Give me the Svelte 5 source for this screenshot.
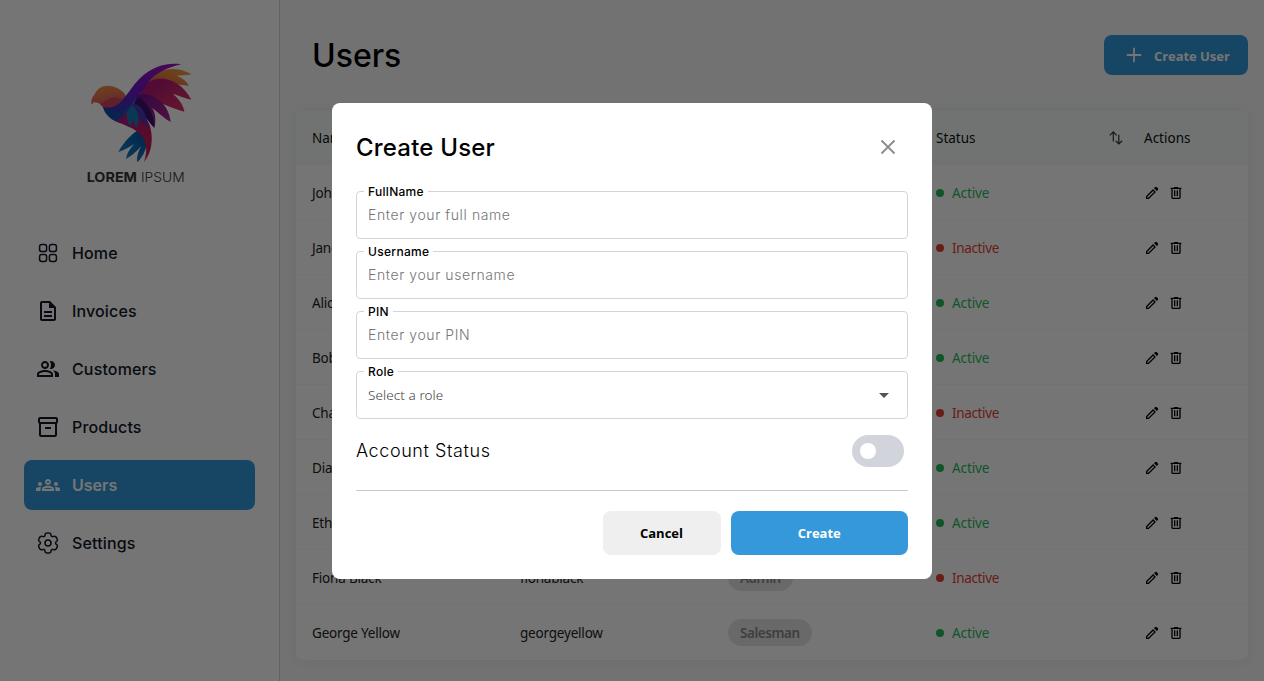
<script>
  const nav = [
    { label: 'Home', icon: 'home' },
    { label: 'Invoices', d: 'M8 16h8v2H8zm0-4h8v2H8zm6-10H6c-1.1 0-2 .9-2 2v16c0 1.1.89 2 1.99 2H18c1.1 0 2-.9 2-2V8l-6-6zm4 18H6V4h7v5h5v11z' },
    { label: 'Customers', d: 'M16.67 13.13C18.04 14.06 19 15.32 19 17v3h4v-3c0-2.18-3.57-3.47-6.33-3.87zM15 12c2.21 0 4-1.79 4-4s-1.79-4-4-4c-.47 0-.91.1-1.33.24C14.5 5.27 15 6.58 15 8s-.5 2.73-1.33 3.76c.42.14.86.24 1.33.24zM9 12c2.21 0 4-1.79 4-4s-1.79-4-4-4-4 1.79-4 4 1.79 4 4 4zm0-6c1.1 0 2 .9 2 2s-.9 2-2 2-2-.9-2-2 .9-2 2-2zm0 7c-2.67 0-8 1.34-8 4v3h16v-3c0-2.66-5.33-4-8-4zm6 5H3v-.99C3.2 16.29 6.3 15 9 15s5.8 1.29 6 2v1z' },
    { label: 'Products', d: 'M20 2H4c-1 0-2 .9-2 2v3.01c0 .72.43 1.34 1 1.69V20c0 1.1 1.1 2 2 2h14c.9 0 2-.9 2-2V8.7c.57-.35 1-.97 1-1.69V4c0-1.1-1-2-2-2zm-1 18H5V9h14v11zm1-13H4V4h16v3zM9 12h6v2H9z' },
    { label: 'Users', active: true, d: 'M4 13c1.1 0 2-.9 2-2s-.9-2-2-2-2 .9-2 2 .9 2 2 2zm1.13 1.1C4.76 14.04 4.39 14 4 14c-.99 0-1.93.21-2.78.58C.48 14.9 0 15.62 0 16.43V18h4.5v-1.61c0-.83.23-1.61.63-2.29zM20 13c1.1 0 2-.9 2-2s-.9-2-2-2-2 .9-2 2 .9 2 2 2zm4 3.43c0-.81-.48-1.53-1.22-1.85C21.93 14.21 20.99 14 20 14c-.39 0-.76.04-1.13.1.4.68.63 1.46.63 2.29V18H24v-1.57zm-7.76-2.78C15.07 13.13 13.63 12.75 12 12.75s-3.07.39-4.24.9C6.68 14.13 6 15.21 6 16.39V18h12v-1.61c0-1.18-.68-2.26-1.76-2.74zM8.07 16c.09-.23.13-.39.91-.69.97-.38 1.99-.56 3.02-.56s2.05.18 3.02.56c.77.3.81.46.91.69H8.07zM12 8c.55 0 1 .45 1 1s-.45 1-1 1-1-.45-1-1 .45-1 1-1m0-2c-1.66 0-3 1.34-3 3s1.34 3 3 3 3-1.34 3-3-1.34-3-3-3z' },
    { label: 'Settings', icon: 'gear' }
  ];

  const users = [
    ['John Doe', 'johndoe', 'Admin', true],
    ['Jane Smith', 'janesmith', 'Salesman', false],
    ['Alice Brown', 'alicebrown', 'Admin', true],
    ['Bob White', 'bobwhite', 'Salesman', true],
    ['Charlie Gray', 'charliegray', 'Admin', false],
    ['Diana Green', 'dianagreen', 'Salesman', true],
    ['Ethan Blue', 'ethanblue', 'Admin', true],
    ['Fiona Black', 'fionablack', 'Admin', false],
    ['George Yellow', 'georgeyellow', 'Salesman', true]
  ];

  const fields = [
    ['FullName', 'Enter your full name'],
    ['Username', 'Enter your username'],
    ['PIN', 'Enter your PIN']
  ];
</script>

<div class="app">
  <aside>
    <svg class="logo" viewBox="0 0 420 435" width="140" height="145">
      <defs>
        <linearGradient id="head" x1="0" y1="0" x2="0.3" y2="1"><stop offset="0" stop-color="#f09440" /><stop offset="1" stop-color="#d8506a" /></linearGradient>
        <linearGradient id="wing" x1="1" y1="0" x2="0" y2="1"><stop offset="0" stop-color="#a010b8" /><stop offset=".5" stop-color="#7014c8" /><stop offset="1" stop-color="#0c4bb0" /></linearGradient>
        <linearGradient id="f1" x1="0" y1="1" x2="1" y2="0"><stop offset="0" stop-color="#c8307a" /><stop offset=".5" stop-color="#e8803c" /><stop offset="1" stop-color="#f0a040" /></linearGradient>
        <linearGradient id="f2" x1="0" y1="0" x2="1" y2="1"><stop offset="0" stop-color="#a8107c" /><stop offset="1" stop-color="#e0365a" /></linearGradient>
        <linearGradient id="f3" x1="0" y1="0" x2="1" y2="1"><stop offset="0" stop-color="#6c1090" /><stop offset="1" stop-color="#b8268c" /></linearGradient>
        <linearGradient id="body" x1="0" y1="0" x2="1" y2="1"><stop offset="0" stop-color="#a01a8a" /><stop offset="1" stop-color="#d01848" /></linearGradient>
        <linearGradient id="tail" x1="1" y1="0" x2="0" y2="1"><stop offset="0" stop-color="#0a4aa0" /><stop offset="1" stop-color="#128ccc" /></linearGradient>
      </defs>
      <path fill="url(#f1)" d="M225 100C255 55 315 45 365 73C345 77 330 76 320 77C338 84 352 96 356 107C330 103 300 100 260 110Z" />
      <path fill="url(#f2)" d="M212 125C235 72 320 68 364 149C345 144 325 137 309 131C330 150 342 170 343 185C305 175 260 150 212 140Z" />
      <path fill="url(#f3)" d="M200 132C260 125 298 170 302 216C282 205 265 187 246 173C258 190 258 215 253 233C238 220 215 180 195 155Z" />
      <path fill="#3b126e" d="M205 142C230 155 256 195 253 233C235 215 214 184 190 160Z" />
      <path fill="url(#tail)" d="M210 238C188 248 162 275 145 306C165 300 180 290 193 282C178 297 170 312 168 327C190 314 202 302 213 289C204 307 199 323 202 337C222 318 236 285 232 245Z" />
      <path fill="url(#body)" d="M136 214C165 225 193 236 208 250C230 272 234 300 222 336C248 305 250 260 239 226C225 190 208 170 192 158C170 180 155 202 136 214Z" />
      <path fill="#4a35b8" d="M188 162C204 155 232 183 233 232C215 215 204 204 196 190Z" />
      <path fill="#127ab8" d="M184 165C207 180 211 210 200 234C194 225 192 216 189 208L181 229C171 216 168 200 171 186Z" />
      <path fill="url(#head)" d="M65 164C62 151 66 142 74 133C83 111 105 102 132 110C152 117 164 128 170 142L150 178C125 184 108 181 96 166C86 158 77 155 71 157Z" />
      <path fill="#d0475e" d="M90 162C112 151 124 134 151 145C160 149 164 152 160 158L130 184C111 183 98 172 90 162Z" />
      <path fill="url(#wing)" d="M99 170C137 182 157 152 181 120C218 66 270 34 334 43C299 50 260 68 239 91C222 115 204 143 184 165C164 189 151 206 137 214C117 204 104 190 99 170Z" />
      <path fill="#1450a8" opacity=".7" d="M99 170C127 197 162 192 207 137C177 181 154 206 137 214C115 202 103 186 99 170Z" />
      <text x="50" y="396" textLength="151" lengthAdjust="spacingAndGlyphs" font-weight="700">LOREM</text>
      <text x="213" y="396" textLength="131" lengthAdjust="spacingAndGlyphs" font-weight="300">IPSUM</text>
    </svg>
    <nav>
      {#each nav as item}
        <div class="item" class:active={item.active}>
          <svg viewBox="0 0 24 24" width="24" height="24">
            {#if item.icon === 'home'}
              <g fill="none" stroke="currentColor" stroke-width="1.5">
                <rect x="3.6" y="3.6" width="7" height="7" rx="2.2" /><rect x="13.4" y="3.6" width="7" height="7" rx="2.2" />
                <rect x="3.6" y="13.4" width="7" height="7" rx="2.2" /><rect x="13.4" y="13.4" width="7" height="7" rx="2.2" />
              </g>
            {:else if item.icon === 'gear'}
              <g fill="none" stroke="currentColor" stroke-width="1.5">
                <circle cx="12" cy="12" r="3" />
                <path d="M13.765 2.152C13.398 2 12.932 2 12 2s-1.398 0-1.765.152a2 2 0 0 0-1.083 1.083c-.092.223-.129.484-.143.863a1.617 1.617 0 0 1-.79 1.353a1.617 1.617 0 0 1-1.567.008c-.336-.178-.579-.276-.82-.308a2 2 0 0 0-1.478.396C4.04 5.79 3.806 6.193 3.34 7s-.7 1.21-.751 1.605a2 2 0 0 0 .396 1.479c.148.192.355.353.676.555c.473.297.777.803.777 1.361s-.304 1.064-.777 1.36c-.321.203-.529.364-.676.556a2 2 0 0 0-.396 1.479c.052.394.285.798.75 1.605c.467.807.7 1.21 1.015 1.453a2 2 0 0 0 1.479.396c.24-.032.483-.13.819-.308a1.617 1.617 0 0 1 1.567.008c.483.28.77.795.79 1.353c.014.38.05.64.143.863a2 2 0 0 0 1.083 1.083C10.602 22 11.068 22 12 22s1.398 0 1.765-.152a2 2 0 0 0 1.083-1.083c.092-.223.129-.483.143-.863c.02-.558.307-1.074.79-1.353a1.617 1.617 0 0 1 1.567-.008c.336.178.579.276.819.308a2 2 0 0 0 1.479-.396c.315-.242.548-.646 1.014-1.453s.7-1.21.751-1.605a2 2 0 0 0-.396-1.479c-.148-.192-.355-.353-.676-.555A1.617 1.617 0 0 1 19.562 12c0-.558.304-1.064.777-1.36c.321-.203.529-.364.676-.556a2 2 0 0 0 .396-1.479c-.052-.394-.285-.798-.75-1.605c-.467-.807-.7-1.21-1.015-1.453a2 2 0 0 0-1.479-.396c-.24.032-.483.13-.82.308a1.617 1.617 0 0 1-1.566-.008a1.617 1.617 0 0 1-.79-1.353c-.014-.38-.05-.64-.143-.863a2 2 0 0 0-1.083-1.083Z" />
              </g>
            {:else}
              <path fill="currentColor" d={item.d} />
            {/if}
          </svg>
          <span>{item.label}</span>
        </div>
      {/each}
    </nav>
  </aside>

  <main>
    <header>
      <h1>Users</h1>
      <button class="add">
        <svg viewBox="0 0 16 16" width="16" height="16"><path d="M8 .8v14.4M.8 8h14.4" stroke="currentColor" stroke-width="1.8" /></svg>
        <span>Create User</span>
      </button>
    </header>
    <div class="table">
      <div class="row head">
        <span>Name</span><span>Username</span><span>Role</span>
        <span class="sort">Status
          <svg viewBox="0 0 16 16" width="16" height="16" fill="none" stroke="#333" stroke-width="1.2"><path d="M5.3 11.5V2M1.8 5.3L5.3 1.8L8.6 5.3M10.8 4.8V14M7.6 10.8L10.8 14L14.2 10.8" /></svg>
        </span>
        <span>Actions</span>
      </div>
      {#each users as [name, login, role, on]}
        <div class="row">
          <span>{name}</span><span>{login}</span><span><b class="pill">{role}</b></span>
          <span class="status" class:on><i></i>{on ? 'Active' : 'Inactive'}</span>
          <span class="actions">
            <svg viewBox="0 0 24 24" width="16" height="16"><path d="M5 19h1.4l8.625-8.625-1.4-1.4L5 17.6V19ZM19.3 8.925l-4.25-4.2 1.4-1.4q.575-.575 1.413-.575t1.412.575l1.4 1.4q.575.575.6 1.388t-.55 1.387L19.3 8.925ZM17.85 10.4L7.25 21H3v-4.25l10.6-10.6 4.25 4.25Z" /></svg>
            <svg viewBox="0 0 24 24" width="16" height="16"><path d="M7 21q-.825 0-1.412-.587T5 19V6H4V4h5V3h6v1h5v2h-1v13q0 .825-.587 1.413T17 21zM17 6H7v13h10zM9 17h2V8H9zm4 0h2V8h-2z" /></svg>
          </span>
        </div>
      {/each}
    </div>
  </main>

  <div class="overlay">
    <section class="modal">
      <div class="title">
        <h2>Create User</h2>
        <svg viewBox="0 0 16 16" width="16" height="16"><path d="M1.5 1.5L14.5 14.5M14.5 1.5L1.5 14.5" stroke="#8c8c8c" stroke-width="1.8" /></svg>
      </div>
      <div class="fields">
        {#each fields as [label, hint]}
          <div class="field"><label for={label}>{label}</label><input id={label} placeholder={hint} /></div>
        {/each}
        <div class="field select">
          <label for="role">Role</label>
          <div id="role">Select a role</div>
          <svg viewBox="0 0 24 24" width="24" height="24"><path d="M7 10l5 5 5-5z" fill="#555" /></svg>
        </div>
      </div>
      <div class="account"><span>Account Status</span><div class="toggle"><i></i></div></div>
      <div class="buttons"><button class="cancel">Cancel</button><button class="create">Create</button></div>
    </section>
  </div>
</div>

<style>
  :global(body) { overflow: hidden; }
  .app { display: flex; height: 681px; background: #f9f9f9; font-family: "Inter", sans-serif; color: #000; overflow: hidden; }
  * { box-sizing: border-box; }
  aside { width: 280px; flex: none; background: #fff; border-right: 1px solid #d1d5db; padding: 50px 24px 0; display: flex; flex-direction: column; align-items: center; }
  .logo { flex: none; }
  .logo text { font-family: "Inter", sans-serif; font-size: 41px; fill: #3a3337; }
  nav { width: 231px; margin-top: 33px; display: flex; flex-direction: column; gap: 8px; }
  .item { height: 50px; padding: 0 12px; display: flex; align-items: center; gap: 12px; border-radius: 8px; font-size: 16px; font-weight: 500; letter-spacing: .14px; color: #111827; }
  .item.active { background: #3498db; color: #fff; font-weight: 600; letter-spacing: 0; }
  main { flex: 1; padding: 35px 16px 0; }
  header { display: flex; justify-content: space-between; height: 40px; align-items: center; padding-left: 16px; }
  h1 { margin: 0; padding-top: 2px; font-size: 32px; font-weight: 500; line-height: 40px; }
  button { border: 0; border-radius: 8px; font: 700 13px "Open Sans", sans-serif; }
  .add { width: 144px; height: 40px; padding: 0 0 0 22px; background: #3498db; color: #fff; display: flex; align-items: center; gap: 12px; white-space: nowrap; }
  .add span { padding-top: 2px; letter-spacing: -.05px; }
  .table { margin-top: 35px; border-radius: 8px; background: #fff; box-shadow: 0 0 12px rgba(90, 130, 190, .16); font: 400 13.5px "Noto Sans", sans-serif; }
  .row { height: 55px; padding-top: 1px; display: grid; grid-template-columns: repeat(4, 208px) 120px; align-items: center; box-shadow: inset 0 -1px #f9f9f9; }
  .row:last-child { box-shadow: none; }
  .row > span { padding-left: 16px; letter-spacing: -.2px; color: #222; }
  .row.head { background: #f6fbf9; border-radius: 8px 8px 0 0; font-weight: 450; padding-top: 0; }
  .row.head > span { letter-spacing: 0; color: #111; }
  .row > .sort { display: flex; align-items: center; justify-content: space-between; padding-right: 4px; }
  .row > .status { display: flex; align-items: center; gap: 8px; color: #e33e34; letter-spacing: -.35px; }
  .status i { width: 8px; height: 8px; border-radius: 50%; background: currentColor; }
  .row > .on { color: #1fbb5d; letter-spacing: -.1px; }
  .pill { display: block; width: max-content; height: 27px; margin-bottom: 2px; line-height: 28px; border-radius: 14px; background: #e5e5e5; color: #8a8a8a; padding: 0 12px; font-weight: 600; letter-spacing: -.45px; }
  .actions { display: flex; gap: 8px; }
  .overlay { position: fixed; inset: 0; background: rgba(0, 0, 0, .54); }
  .modal { position: absolute; top: 50%; left: 50%; transform: translate(-50%, -50%); width: 600px; height: 476px; padding: 24px; background: #fff; border-radius: 8px; }
  .title { height: 41px; display: flex; align-items: center; justify-content: space-between; padding-right: 12px; }
  h2 { margin: 0; font-size: 24px; font-weight: 500; letter-spacing: .2px; }
  .fields { margin-top: 23px; display: flex; flex-direction: column; gap: 12px; }
  .field { height: 48px; border: 1px solid #d1d5db; border-radius: 4px; position: relative; display: flex; align-items: center; padding: 0 11px; }
  .field label { position: absolute; left: 7px; top: -8px; padding: 0 4px; background: #fff; font-size: 12px; line-height: 16px; font-weight: 500; letter-spacing: .3px; }
  .field input { border: 0; outline: 0; padding: 0; width: 100%; font: 300 14px "Inter", sans-serif; letter-spacing: .6px; background: none; }
  .field input::placeholder { color: #757575; opacity: 1; }
  .select { justify-content: space-between; font: 300 13.5px "Noto Sans", sans-serif; letter-spacing: .08px; color: #444; }
  .select label { color: #000; font-family: "Inter", sans-serif; }
  .account { margin-top: 16px; height: 56px; border-bottom: 1px solid #c8cad2; display: flex; justify-content: space-between; padding-right: 4px; font-size: 18px; line-height: 32px; letter-spacing: .58px; font-weight: 350; }
  .toggle { width: 52px; height: 32px; border-radius: 16px; background: #d1d5db; padding: 8px; }
  .toggle i { display: block; width: 16px; height: 16px; border-radius: 50%; background: #fff; }
  .buttons { margin-top: 20px; display: flex; justify-content: flex-end; gap: 10px; }
  .buttons button { height: 44px; }
  .cancel { width: 118px; background: #efefef; color: #000; }
  .create { width: 177.5px; background: #3498db; color: #fff; }
</style>
